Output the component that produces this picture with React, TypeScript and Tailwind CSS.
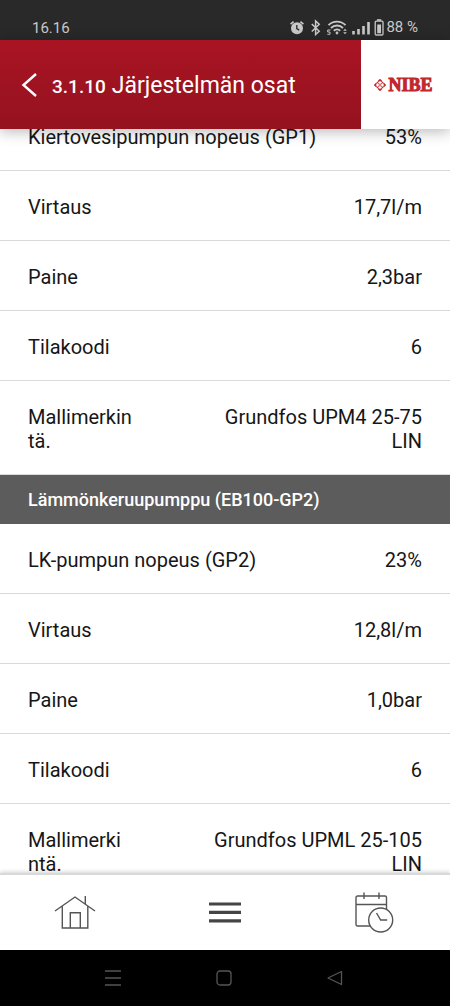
type Reading = {
  label: string;
  value: string;
  labelWidth?: string;
};

const circulationPump: Reading[] = [
  { label: "Kiertovesipumpun nopeus (GP1)", value: "53%" },
  { label: "Virtaus", value: "17,7l/m" },
  { label: "Paine", value: "2,3bar" },
  { label: "Tilakoodi", value: "6" },
  { label: "Mallimerkintä.", value: "Grundfos UPM4 25-75 LIN", labelWidth: "w-[110px]" },
];

const brinePump: Reading[] = [
  { label: "LK-pumpun nopeus (GP2)", value: "23%" },
  { label: "Virtaus", value: "12,8l/m" },
  { label: "Paine", value: "1,0bar" },
  { label: "Tilakoodi", value: "6" },
  { label: "Mallimerkintä.", value: "Grundfos UPML 25-105 LIN", labelWidth: "w-[98px]" },
];

function StatusBar() {
  return (
    <div className="flex h-10 shrink-0 items-end justify-between bg-[#292929] px-8 pb-[3px] text-[#c9c9c9]">
      <span className="text-[15px] leading-[18px]">16.16</span>
      <div className="flex items-center">
        <svg width="98" height="20" viewBox="0 0 98 20" fill="none" stroke="currentColor" aria-hidden="true">
          {/* alarm */}
          <circle cx="9" cy="11.3" r="6" fill="currentColor" stroke="none" />
          <path d="M2.6 7.2 5.6 4.6M15.4 7.2 12.4 4.6" strokeWidth="1.6" />
          <path d="M8.8 8v3.6l2.4 1.5" stroke="#292929" strokeWidth="1.3" />
          {/* bluetooth */}
          <path d="m23.8 7 7.4 7.2-3.6 3.3V4l3.6 3.3-7.4 7.2" strokeWidth="1.5" />
          {/* wifi */}
          <path d="M40.5 8.2a12 12 0 0 1 17 0M43 11a8.5 8.5 0 0 1 12 0M45.8 13.7a4.6 4.6 0 0 1 6.4 0" strokeWidth="1.9" />
          <circle cx="49" cy="16" r="1.4" fill="currentColor" stroke="none" />
          <path d="M42.5 13h-2.8v2h2.3v2.3h-2.6" strokeWidth="1" />
          <path d="m55.2 13.8 1.8-2 1.8 2ZM55.2 15.2l1.8 2 1.8-2Z" fill="currentColor" stroke="none" />
          {/* signal */}
          <path d="M65.5 14v3.5M70.5 12v5.5M75.5 9v8.5M80.5 5v12.5" strokeWidth="2.6" />
          {/* battery */}
          <rect x="87.2" y="4.2" width="7.8" height="13.8" rx="1" strokeWidth="1.3" />
          <path d="M89 3h4.2" strokeWidth="1.6" />
          <path d="M89.2 7.5h3.8v8.8h-3.8z" fill="currentColor" stroke="none" />
        </svg>
        <span className="text-[15px] leading-[18px]">88 %</span>
      </div>
    </div>
  );
}

function Header() {
  return (
    <header className="relative z-10 flex h-[89px] shrink-0 bg-white shadow-[0_2px_14px_rgba(0,0,0,0.3)]">
      <div className="flex flex-1 items-center gap-3 bg-linear-to-b from-[#a91423] to-[#95121f] pl-5 text-white">
        <button type="button" aria-label="Takaisin" className="shrink-0">
          <svg width="20" height="28" viewBox="0 0 20 28" fill="none" stroke="currentColor" strokeWidth="2.4">
            <path d="M16 3 3.5 14 16 25" />
          </svg>
        </button>
        <h1 className="flex items-baseline gap-1.5 pt-1 whitespace-nowrap">
          <span className="text-[19px] font-medium">3.1.10</span>
          <span className="text-[23px]">Järjestelmän osat</span>
        </h1>
      </div>
      <div className="flex w-[89px] items-center justify-center gap-0.5 pr-2 pl-1 text-[#c1272d]">
        <svg width="12" height="12" viewBox="0 0 12 12" fill="none" stroke="currentColor" className="shrink-0" aria-hidden="true">
          <path d="M4.2 2.6 6 .8l1.8 1.800M9.400 4.200 11.200 6 9.400 7.800M7.800 9.400 6 11.200 4.200 9.400M2.600 7.800.8 6l1.800-1.800" strokeWidth="1.500" />
          <path d="m2.800 2.800 1.800 1.800M9.200 2.800 7.400 4.600M2.800 9.200l1.800-1.800M9.200 9.200 7.400 7.400" strokeWidth="1.200" />
          <circle cx="6" cy="6" r="1.100" strokeWidth=".8" />
        </svg>
        <span className="font-['Liberation_Serif',serif] text-[18px] leading-5 font-bold [-webkit-text-stroke:1px]">NIBE</span>
      </div>
    </header>
  );
}

function Readings({ items }: { items: Reading[] }) {
  return (
    <dl>
      {items.map((item) => (
        <div
          key={item.label}
          className="flex justify-between border-b border-[#d9d9d9] px-7 pt-6 pb-[21px] text-[20px] leading-6"
        >
          <dt className={item.labelWidth ? `${item.labelWidth} break-all` : "whitespace-nowrap"}>{item.label}</dt>
          <dd className="max-w-[225px] text-right">{item.value}</dd>
        </div>
      ))}
    </dl>
  );
}

function TabBar() {
  return (
    <nav className="relative z-10 grid h-[77px] shrink-0 grid-cols-3 place-items-center border-t-2 border-[#d9d9d9] bg-white text-[#555] shadow-[0_-1px_4px_rgba(0,0,0,0.18)]">
      <button type="button" aria-label="Koti">
        <svg width="42" height="42" viewBox="0 0 42 42" fill="none" stroke="currentColor" strokeWidth="1.4">
          <path d="M1 19 21 5l20 14M31.3 12V4M8.3 14.5V36h25.5V14.5M16.3 36V20.7h10V36" />
        </svg>
      </button>
      <button type="button" aria-label="Valikko">
        <svg width="32" height="22" viewBox="0 0 32 22" fill="none" stroke="#454545" strokeWidth="3.2">
          <path d="M0 2h32M0 10.400h32M0 18.800h32" />
        </svg>
      </button>
      <button type="button" aria-label="Ajastus">
        <svg width="40" height="42" viewBox="0 0 40 42" fill="none" stroke="currentColor" strokeWidth="1.4">
          <path d="M15 34H2.500A1.500 1.500 0 0 1 1 32.500V5.500A1.500 1.500 0 0 1 2.500 4h27.500A1.500 1.500 0 0 1 31.500 5.500V17M1 12.500h30.500M9 .5V7M24 .5V7" />
          <circle cx="25.700" cy="28" r="12" />
          <path d="m21.500 21 4.200 7h6.500" />
        </svg>
      </button>
    </nav>
  );
}

function SystemBar() {
  return (
    <div className="flex h-14 shrink-0 items-center justify-center gap-[95px] bg-black pr-0.5 text-[#565656]">
      <button type="button" aria-label="Viimeisimmät">
        <svg width="16" height="16" viewBox="0 0 16 16" fill="none" stroke="currentColor" strokeWidth="1.300">
          <path d="M0 1h16M0 8h16M0 15h16" />
        </svg>
      </button>
      <button type="button" aria-label="Aloitusnäyttö">
        <svg width="16" height="16" viewBox="0 0 16 16" fill="none" stroke="currentColor" strokeWidth="1.300">
          <rect x="1" y="1" width="14" height="14" rx="3" />
        </svg>
      </button>
      <button type="button" aria-label="Edellinen">
        <svg width="16" height="16" viewBox="0 0 16 16" fill="none" stroke="currentColor" strokeWidth="1.300" strokeLinejoin="round">
          <path d="M14.500 1.500v13L1 8Z" />
        </svg>
      </button>
    </div>
  );
}

export default function App() {
  return (
    <div className="flex h-screen flex-col bg-white font-[Roboto,sans-serif] text-[#161616]">
      <StatusBar />
      <Header />
      <main className="min-h-0 flex-1 overflow-hidden">
        {/* the list is scrolled a little under the header */}
        <div className="-mt-7">
          <Readings items={circulationPump} />
          <h2 className="bg-[#5c5c5c] px-7 pt-[13px] pb-3 text-[18px] leading-6 font-medium text-white">
            Lämmönkeruupumppu (EB100-GP2)
          </h2>
          <Readings items={brinePump} />
        </div>
      </main>
      <TabBar />
      <SystemBar />
    </div>
  );
}
